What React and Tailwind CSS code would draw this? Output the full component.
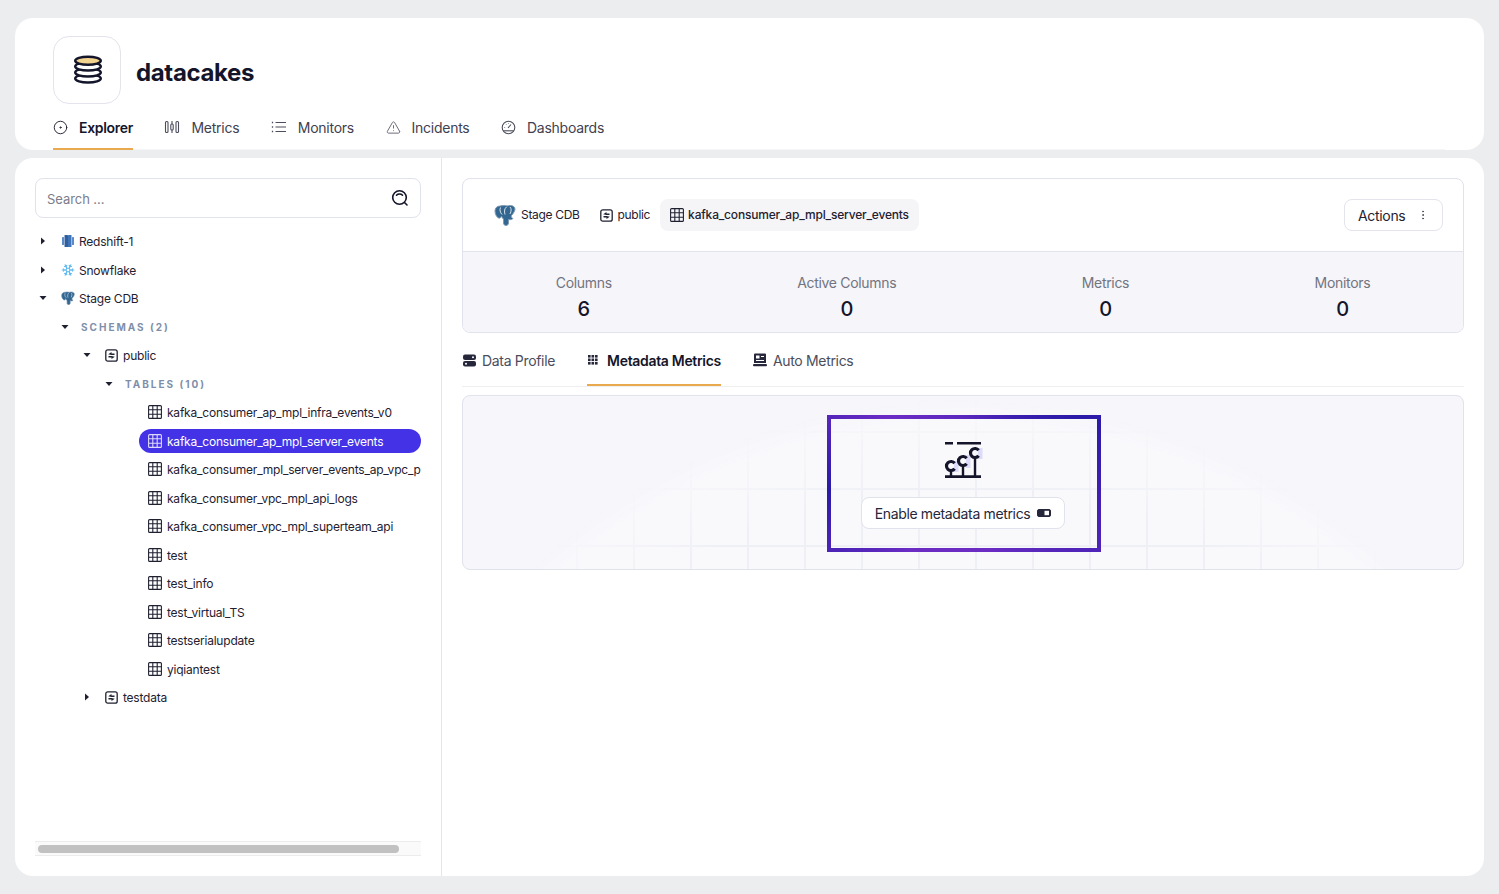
import React from 'react';
import { CircleDot, TriangleAlert, EllipsisVertical, Snowflake } from 'lucide-react';

const CakeLogo = () => (
  <svg width="30" height="30" viewBox="0 0 30 30" fill="#fff" stroke="#14152a" strokeWidth="2.400">
    <ellipse cx="15" cy="23.500" rx="12.800" ry="4" />
    <ellipse cx="15" cy="17.500" rx="12.800" ry="4" />
    <ellipse cx="15" cy="11.500" rx="12.800" ry="4" />
    <ellipse cx="15" cy="5.800" rx="12.800" ry="4" fill="#f2d48f" />
  </svg>
);

const CandleIcon = () => (
  <svg width="16" height="14" viewBox="0 0 16 14" fill="none" stroke="#4b4d5c" strokeWidth="1.100">
    <rect x="1.500" y="1.500" width="2.500" height="11" rx="1" />
    <path d="M8 1v3M8 10v3" />
    <rect x="6.800" y="4" width="2.400" height="6" rx="1" />
    <rect x="12" y="1.500" width="2.500" height="11" rx="1" />
  </svg>
);

const ListIcon = () => (
  <svg width="16" height="14" viewBox="0 0 16 14" fill="none" stroke="#4b4d5c" strokeWidth="1.100">
    <path d="M4.500 2.500H15M4.500 7H15M4.500 11.500H15" />
    <path d="M1.500 1.800v1.400M1.500 6.300v1.400M1.500 10.800v1.400" strokeWidth="1.300" />
  </svg>
);

const GaugeIcon = () => (
  <svg width="15" height="15" viewBox="0 0 15 15" fill="none" stroke="#4b4d5c" strokeWidth="1.100">
    <circle cx="7.500" cy="7.500" r="6.300" />
    <path d="M2.200 10.800h10.600" />
    <path d="M7 8l3-3.500M3.500 7.500h.6M5 4.300l.4.400M7.500 3.200v.6" />
  </svg>
);

const SearchIcon = () => (
  <svg width="18" height="18" viewBox="0 0 18 18" fill="none" stroke="#14152a" strokeWidth="1.600" strokeLinecap="round">
    <circle cx="8.500" cy="8.500" r="6.800" />
    <path d="M13.500 13.500L16 16M5.500 6.200c.7-.8 1.800-1.200 3-1.200s2.300.4 3 1.200" />
  </svg>
);

const Elephant = ({ size = 14 }) => (
  <svg width={size} height={size} viewBox="0 0 22 22" className="shrink-0">
    <path
      d="M6 2C3 2 1 4 1 7c0 3 1.500 6 3.500 7 1.300.6 2.500-.5 3-2 .5 1.500 1 2.500 2 3v4c0 1.500 1 2.500 2.500 2.500s2.500-1 2.500-2.500v-3.500c2 .5 4 0 4.500-1-1.500-.5-2-1.500-1.500-3C19.500 9.500 21 6.500 21 5c0-2-2-3.500-4.500-3.500-1.500 0-2.500.2-3.500.5-2-.7-4.500-.5-7 0z"
      fill="#336791"
      stroke="#7f9bb3"
      strokeWidth="1"
    />
    <path d="M6.500 3.500c-1 2-.5 5 1.500 7M12.500 3c-2 1.500-2.500 4-1.500 7.500M16 3c1.500 1.500 1.500 4 0 7" stroke="#d5e1ea" strokeWidth="1" fill="none" />
  </svg>
);

const RedshiftIcon = () => (
  <svg width="14" height="14" viewBox="0 0 14 14" className="shrink-0">
    <rect x="1" y="3" width="2" height="8" rx=".5" fill="#5b8ac9" />
    <rect x="3.500" y="1" width="3.500" height="12" rx=".5" fill="#2f5f9f" />
    <rect x="7" y="1" width="3.500" height="12" rx=".5" fill="#3f74b8" />
    <rect x="11" y="3" width="2" height="8" rx=".5" fill="#5b8ac9" />
  </svg>
);

const SchemaIcon = () => (
  <svg width="13" height="13" viewBox="0 0 13 13" fill="none" className="shrink-0">
    <rect x=".8" y=".8" width="11.400" height="11.400" rx="2" stroke="#1f2130" strokeWidth="1.300" />
    <path d="M3.200 5.200L6.500 3v1.400h3v1.500h-3zM9.800 7.800L6.500 10V8.600h-3V7.100h3z" fill="#1f2130" />
  </svg>
);

const TableIcon = ({ color = '#1f2130' }) => (
  <svg width="14" height="14" viewBox="0 0 14 14" fill="none" stroke={color} strokeWidth="1.100" className="shrink-0">
    <rect x=".6" y=".6" width="12.800" height="12.800" rx="1" />
    <path d="M.6 4.800h12.800M.6 9.200h12.800M4.800.6v12.800M9.200.6v12.800" />
  </svg>
);

const Caret = ({ open }) => (
  <svg width="8" height="8" viewBox="0 0 8 8" className="shrink-0" fill="#1f2130">
    {open ? <path d="M.5 2h7L4 6z" /> : <path d="M2 .5v7L6 4z" />}
  </svg>
);

const ServerIcon = () => (
  <svg width="13" height="13" viewBox="0 0 13 13" fill="#26273a">
    <rect y=".5" width="13" height="5.500" rx="2" />
    <rect y="7" width="13" height="5.500" rx="2" />
    <circle cx="10" cy="3.200" r="1" fill="#fff" />
    <circle cx="3" cy="9.800" r="1" fill="#fff" />
  </svg>
);

const DotsIcon = () => (
  <svg width="12" height="12" viewBox="0 0 12 12" fill="#26273a">
    {[1, 4.500, 8].map((x) =>
      [1, 4.500, 8].map((y) => <rect key={`${x}-${y}`} x={x} y={y} width="2.600" height="2.600" />)
    )}
  </svg>
);

const AutoIcon = () => (
  <svg width="14" height="14" viewBox="0 0 14 14" fill="#26273a">
    <path d="M1 1.500A1 1 0 0 1 2 .5h10a1 1 0 0 1 1 1V10H1z" />
    <rect x="3" y="2.500" width="3.500" height="3" fill="#fff" />
    <path d="M8 3h3v1H8zM3 7h8v1H3z" fill="#fff" />
    <rect y="11" width="14" height="2.200" rx="1" />
  </svg>
);

const MetricsEmptyIcon = () => (
  <svg width="40" height="38" viewBox="0 0 40 38" fill="none">
    <rect x="10" y="20" width="4.500" height="11" fill="#dcdcfa" />
    <rect x="22" y="14" width="4.500" height="13" fill="#dcdcfa" />
    <rect x="34" y="7" width="4.500" height="11" fill="#dcdcfa" />
    <g stroke="#14152a" strokeWidth="3.200">
      <path d="M1 2.200h8M13 2.200h24" strokeWidth="2.400" />
      <path d="M1 35.600h36" strokeWidth="2.800" />
      <path d="M7 29.500v6M19 24.500v11M31 16.500v19" strokeWidth="2.400" />
      <path d="M10.600 22.300A4.500 4.500 0 1 0 10.600 27.700" />
      <path d="M22.600 17.300A4.500 4.500 0 1 0 22.600 22.700" />
      <path d="M34.600 9.300A4.500 4.500 0 1 0 34.600 14.700" />
    </g>
  </svg>
);

const navItems = [
  { label: 'Explorer', icon: <CircleDot size={15} strokeWidth={1.500} color="#1f2130" />, active: true },
  { label: 'Metrics', icon: <CandleIcon /> },
  { label: 'Monitors', icon: <ListIcon /> },
  { label: 'Incidents', icon: <TriangleAlert size={15} strokeWidth={1.300} color="#4b4d5c" /> },
  { label: 'Dashboards', icon: <GaugeIcon /> },
];

const tables = [
  'kafka_consumer_ap_mpl_infra_events_v0',
  'kafka_consumer_ap_mpl_server_events',
  'kafka_consumer_mpl_server_events_ap_vpc_public',
  'kafka_consumer_vpc_mpl_api_logs',
  'kafka_consumer_vpc_mpl_superteam_api',
  'test',
  'test_info',
  'test_virtual_TS',
  'testserialupdate',
  'yiqiantest',
];

const stats = [
  { label: 'Columns', value: 6 },
  { label: 'Active Columns', value: 0 },
  { label: 'Metrics', value: 0 },
  { label: 'Monitors', value: 0 },
];

const TreeRow = ({ className, open, icon, label }) => (
  <div className={`flex items-center h-[28.5px] text-[12px] tracking-[-0.018em] text-[#1f2130] ${className}`}>
    <Caret open={open} />
    <span className="w-[14px] shrink-0" />
    <span className="w-[14px] shrink-0 flex">{icon}</span>
    <span className="ml-[4px] mt-[2px] whitespace-nowrap">{label}</span>
  </div>
);

const SectionRow = ({ className, label }) => (
  <div className={`flex items-center h-[28.5px] ${className}`}>
    <Caret open />
    <span className="ml-[12px] mt-[2px] text-[10px] font-bold tracking-[0.2em] text-[#7f8fa9] whitespace-nowrap">{label}</span>
  </div>
);

export default function App() {
  return (
    <div className="h-[894px] overflow-hidden bg-[#ecedef] px-[15px] pt-[18px] font-['Inter',sans-serif] tracking-[-0.02em] text-[#1f2130]">
      {/* Header */}
      <header className="h-[132px] bg-white rounded-[18px] pl-[38px] pr-[39px] pt-[18px]">
        <div className="flex items-center">
          <div className="w-[68px] h-[68px] rounded-[16px] border border-[#e3e4ec] flex items-center justify-center pl-[2px]">
            <CakeLogo />
          </div>
          <h1 className="ml-[15px] mt-[6px] text-[24px] font-bold tracking-[-0.015em] text-[#14152a]">datacakes</h1>
        </div>
        <nav className="flex gap-[31.5px] h-[46px] border-b border-[#f6f6f8]">
          {navItems.map((item) => (
            <div
              key={item.label}
              className={`flex items-center gap-[11px] text-[14px] border-b-2 h-[46px] pt-[2px] ${
                item.active
                  ? 'border-[#e9a94f] font-semibold text-[#14152a]'
                  : 'border-transparent tracking-[-0.018em] text-[#3f4150]'
              }`}
            >
              {item.icon}
              <span>{item.label}</span>
            </div>
          ))}
        </nav>
      </header>

      {/* Main */}
      <main className="mt-2 h-[718px] bg-white rounded-[18px] flex">
        <aside className="w-[427px] shrink-0 border-r border-[#e3e4ec] pl-5 pr-5 pt-5 pb-5 flex flex-col">
          <div className="h-10 shrink-0 rounded-lg border border-[#e0e2ec] flex items-center justify-between pl-[11px] pr-[11px]">
            <span className="mt-[3px] text-[13px] tracking-[-0.005em] text-[#7b7d8a]">Search ...</span>
            <SearchIcon />
          </div>
          <div className="flex-1 overflow-hidden mt-[9px]">
            <TreeRow className="pl-[4px]" icon={<RedshiftIcon />} label="Redshift-1" />
            <TreeRow className="pl-[4px]" icon={<Snowflake size={14} color="#5cb8f0" strokeWidth={1.800} className="shrink-0" />} label="Snowflake" />
            <TreeRow className="pl-[4px]" open icon={<Elephant />} label="Stage CDB" />
            <SectionRow className="pl-[26px]" label="SCHEMAS (2)" />
            <TreeRow className="pl-[48px]" open icon={<SchemaIcon />} label="public" />
            <SectionRow className="pl-[70px]" label="TABLES (10)" />
            {tables.map((name, i) => (
              <div key={name} className="h-[28.5px] flex items-center pl-[104px]">
                <div
                  className={`flex items-center gap-[5px] h-6 flex-1 min-w-0 pl-[9px] rounded-full overflow-hidden text-[12px] tracking-[-0.018em] whitespace-nowrap ${
                    i === 1 ? 'bg-[#4433e6] text-white' : 'text-[#1f2130]'
                  }`}
                >
                  <TableIcon color={i === 1 ? '#dcd9fb' : '#1f2130'} />
                  <span className="mt-[2px]">{name}</span>
                </div>
              </div>
            ))}
            <TreeRow className="pl-[48px]" icon={<SchemaIcon />} label="testdata" />
          </div>
          <div className="h-[15px] shrink-0 bg-[#fafafa] border-y border-[#ececec] flex items-center pl-[3px]">
            <div className="w-[361px] h-2 rounded-full bg-[#c1c1c1]" />
          </div>
        </aside>

        <section className="flex-1 min-w-0 pl-5 pr-5 pt-5">
          <div className="rounded-lg border border-[#e0e2ec] overflow-hidden">
            <div className="h-[73px] flex items-center justify-between pl-[31px] pr-5 border-b border-[#e0e2ec]">
              <div className="flex items-center text-[12px] text-[#1f2130]">
                <Elephant size={22} />
                <span className="ml-[5px]">Stage CDB</span>
                <span className="ml-[20px] flex"><SchemaIcon /></span>
                <span className="ml-[5px]">public</span>
                <div className="ml-[10px] h-8 px-[10px] rounded-lg bg-[#f5f5f8] flex items-center gap-[4px] font-medium tracking-[-0.016em]">
                  <TableIcon />
                  <span>kafka_consumer_ap_mpl_server_events</span>
                </div>
              </div>
              <button className="h-8 w-[99px] rounded-lg border border-[#e3e4ec] flex items-center justify-between pl-[13px] pr-[13px] text-[14px] text-[#1f2130]">
                Actions
                <EllipsisVertical size={12} color="#4b4d5c" />
              </button>
            </div>
            <div className="h-[80px] bg-[#f5f5fa] flex justify-around items-center pt-[11px]">
              {stats.map((s) => (
                <div key={s.label} className="flex flex-col items-center">
                  <span className="text-[14px] leading-5 text-[#72747f]">{s.label}</span>
                  <span className="mt-[2px] text-[20px] leading-7 font-medium text-[#14152a]">{s.value}</span>
                </div>
              ))}
            </div>
          </div>

          <div className="mt-[1px] h-[53px] flex gap-[32px] border-b border-[#efeff2] text-[14px]">
            <div className="flex items-center gap-[6px] pl-[1px] text-[#4b4d5c]">
              <ServerIcon />
              <span>Data Profile</span>
            </div>
            <div className="flex items-center gap-[8px] font-semibold text-[#14152a] border-b-2 border-[#e9a94f] pt-[2px]">
              <DotsIcon />
              <span>Metadata Metrics</span>
            </div>
            <div className="flex items-center gap-[6px] text-[#4b4d5c]">
              <AutoIcon />
              <span>Auto Metrics</span>
            </div>
          </div>

          <div className="relative mt-2 h-[175px] rounded-lg border border-[#e0e2ec] bg-[#f6f6fb] overflow-hidden flex items-center justify-center pl-[2px] pt-[2px]">
            {/* lighter disc and faded grid behind the empty state */}
            <div className="absolute inset-0 bg-[#f9f9fc] [mask-image:radial-gradient(circle_640px_at_50%_642px,black_96%,transparent_100%)]" />
            <div className="absolute inset-0 bg-[linear-gradient(#eff0f6_2px,transparent_2px),linear-gradient(90deg,#eff0f6_2px,transparent_2px)] bg-[size:57px_57px] bg-[position:0_35px,-1px_0] [mask-image:radial-gradient(circle_640px_at_50%_642px,black_86%,transparent_100%)]" />
            <div className="relative w-[274px] h-[137px] border-4 border-solid [border-image:conic-gradient(from_60deg,#2a1aa8_0deg,#6b2cc4_100deg,#6b2cc4_160deg,#2a1aa8_208deg,#6b2cc4_250deg,#5a28bd_300deg,#2a1aa8_360deg)_1] flex flex-col items-center pt-[22px]">
              <MetricsEmptyIcon />
              <button className="mt-[18px] mr-[2px] h-8 w-[204px] rounded-lg border border-[#e0e2ec] bg-white flex items-center justify-center gap-[7px] text-[14px] tracking-[-0.025em] text-[#26273a]">
                Enable metadata metrics
                <svg width="14" height="8" viewBox="0 0 14 8">
                  <rect x=".5" y=".5" width="13" height="7" rx="1.500" fill="#26273a" stroke="#26273a" />
                  <rect x="7.500" y="1.800" width="4.500" height="4.400" fill="#fff" />
                </svg>
              </button>
            </div>
          </div>
        </section>
      </main>
    </div>
  );
}
